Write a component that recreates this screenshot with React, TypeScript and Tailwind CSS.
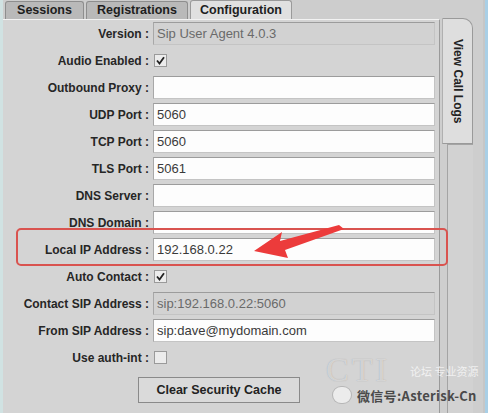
import React from "react";

const Label = ({ children }: { children: React.ReactNode }) => (
  <div className="w-[146px] shrink-0 text-right text-[12px] font-bold text-[#262626] leading-none whitespace-nowrap">
    {children}
  </div>
);

const TextField = ({ value = "", disabled = false }: { value?: string; disabled?: boolean }) => (
  <div
    className={
      "ml-[4px] w-[282px] h-[23px] flex items-center px-[3px] text-[13px] leading-none border-t border-l border-t-[#9c9c9c] border-l-[#a8a8a8] border-r border-b border-r-[#c4c4c4] border-b-[#c4c4c4] " +
      (disabled ? "bg-[#d2d2d2] text-[#6a6a6a]" : "bg-[#fdfdfd] text-[#3a3a3a]")
    }
  >
    {value}
  </div>
);

const Check = ({ checked }: { checked: boolean }) => (
  <div className="ml-[5px] w-[13px] h-[13px] border border-[#9a9a9a] bg-[#ececec] flex items-center justify-center">
    {checked && (
      <svg width="9" height="9" viewBox="0 0 9 9">
        <path d="M1 4.5 L3.5 7.5 L8 1.2" stroke="#222" strokeWidth="1.8" fill="none" />
      </svg>
    )}
  </div>
);

const Row = ({ children }: { children: React.ReactNode }) => (
  <div className="h-[23px] flex items-center">{children}</div>
);

export default function App() {
  return (
    <div className="relative w-[500px] h-[413px] overflow-hidden bg-white flex font-['Liberation_Sans',Arial,sans-serif]">
      {/* left strip */}
      <div className="w-[3px] h-full bg-[#d0e2e2]" />
      {/* main */}
      <div className="w-[437px] h-full flex flex-col bg-[#d4d4d4]">
        {/* tabs */}
        <div className="h-[19px] flex items-end gap-[2px] pl-[2px] bg-[#cdcdcd]">
          <div className="w-[79px] h-[18px] rounded-t-[3px] border border-b-0 border-[#8e8e8e] bg-[#b9b9b9] flex items-center justify-center text-[12.5px] font-bold text-[#1e1e1e] leading-none">
            Sessions
          </div>
          <div className="w-[102px] h-[18px] rounded-t-[3px] border border-b-0 border-[#8e8e8e] bg-[#b9b9b9] flex items-center justify-center text-[12.5px] font-bold text-[#1e1e1e] leading-none">
            Registrations
          </div>
          <div className="w-[102px] h-[19px] rounded-t-[3px] border border-b-0 border-[#9a9a9a] bg-[#e0e0e0] flex items-center justify-center text-[12.5px] font-bold text-[#1e1e1e] leading-none">
            Configuration
          </div>
        </div>
        {/* panel */}
        <div className="flex-1 border-t border-t-[#f2f2f2] border-r border-r-[#9a9a9a] pt-[2px] flex flex-col gap-[4px]">
          <Row>
            <Label>Version :</Label>
            <TextField value="Sip User Agent 4.0.3" disabled />
          </Row>
          <Row>
            <Label>Audio Enabled :</Label>
            <Check checked />
          </Row>
          <Row>
            <Label>Outbound Proxy :</Label>
            <TextField />
          </Row>
          <Row>
            <Label>UDP Port :</Label>
            <TextField value="5060" />
          </Row>
          <Row>
            <Label>TCP Port :</Label>
            <TextField value="5060" />
          </Row>
          <Row>
            <Label>TLS Port :</Label>
            <TextField value="5061" />
          </Row>
          <Row>
            <Label>DNS Server :</Label>
            <TextField />
          </Row>
          <Row>
            <Label>DNS Domain :</Label>
            <TextField />
          </Row>
          <Row>
            <Label>Local IP Address :</Label>
            <TextField value="192.168.0.22" />
          </Row>
          <Row>
            <Label>Auto Contact :</Label>
            <Check checked />
          </Row>
          <Row>
            <Label>Contact SIP Address :</Label>
            <TextField value="sip:192.168.0.22:5060" disabled />
          </Row>
          <Row>
            <Label>From SIP Address :</Label>
            <TextField value="sip:dave@mydomain.com" />
          </Row>
          <Row>
            <Label>Use auth-int :</Label>
            <Check checked={false} />
          </Row>
          <div className="mt-[4px] ml-[135px] w-[162px] h-[26px] border border-[#8a8a8a] bg-[#dadada] flex items-center justify-center text-[12.5px] font-bold text-[#222] leading-none">
            Clear Security Cache
          </div>
        </div>
      </div>
      {/* right column */}
      <div className="w-[43px] h-full flex flex-col bg-[#cecece]">
        <div className="h-[18px]" />
        <div className="ml-[2px] w-[31px] h-[126px] rounded-tr-[10px] border border-[#9a9a9a] border-l-[#b0b0b0] bg-[#dedede] flex items-center justify-center">
          <span className="[writing-mode:vertical-rl] text-[12px] font-bold text-[#222] leading-none">
            View Call Logs
          </span>
        </div>
        <div className="ml-[7px] w-[26px] flex-1 border-l border-t border-[#a4a4a4] bg-[#d2d2d2]" />
      </div>
      <div className="w-[2px] h-full bg-[#c6c6c6]" />
      <div className="w-[3px] h-full bg-[#a9cfe6]" />
      <div className="flex-1 h-full bg-white" />

      {/* red annotation box */}
      <div className="absolute left-[16px] top-[228px] w-[432px] h-[38px] rounded-[5px] border-2 border-[#d9534f]" />
      {/* arrow */}
      <svg className="absolute left-0 top-0" width="500" height="413" viewBox="0 0 500 413">
        <polygon
          points="254,251 282,232 280,241 339,225 344,229 285,250 288,258"
          fill="#ec3b3b"
        />
      </svg>
      {/* watermark */}
      <div className="absolute left-[326px] top-[353px] text-[34px] font-['Liberation_Serif',serif] text-[rgba(255,255,255,0.55)] [text-shadow:0_0_1px_rgba(120,120,120,0.6)] leading-none tracking-[3px]">
        CTI
      </div>
      <div className="absolute left-[332px] top-[386px] w-[20px] h-[18px] rounded-full bg-[rgba(255,255,255,0.55)] border border-[rgba(130,130,130,0.5)]" />
      <div className="absolute left-[410px] top-[366px] text-[11px] text-[rgba(255,255,255,0.7)] font-['Noto_Sans_CJK_SC',sans-serif] leading-none">
        论坛 专业资源
      </div>
      <div className="absolute left-[357px] top-[389px] text-[13px] font-bold text-[#4a4a4a] font-['Noto_Sans_CJK_SC',sans-serif] leading-none whitespace-nowrap tracking-[0.3px]">
        微信号:Asterisk-Cn
      </div>
    </div>
  );
}
